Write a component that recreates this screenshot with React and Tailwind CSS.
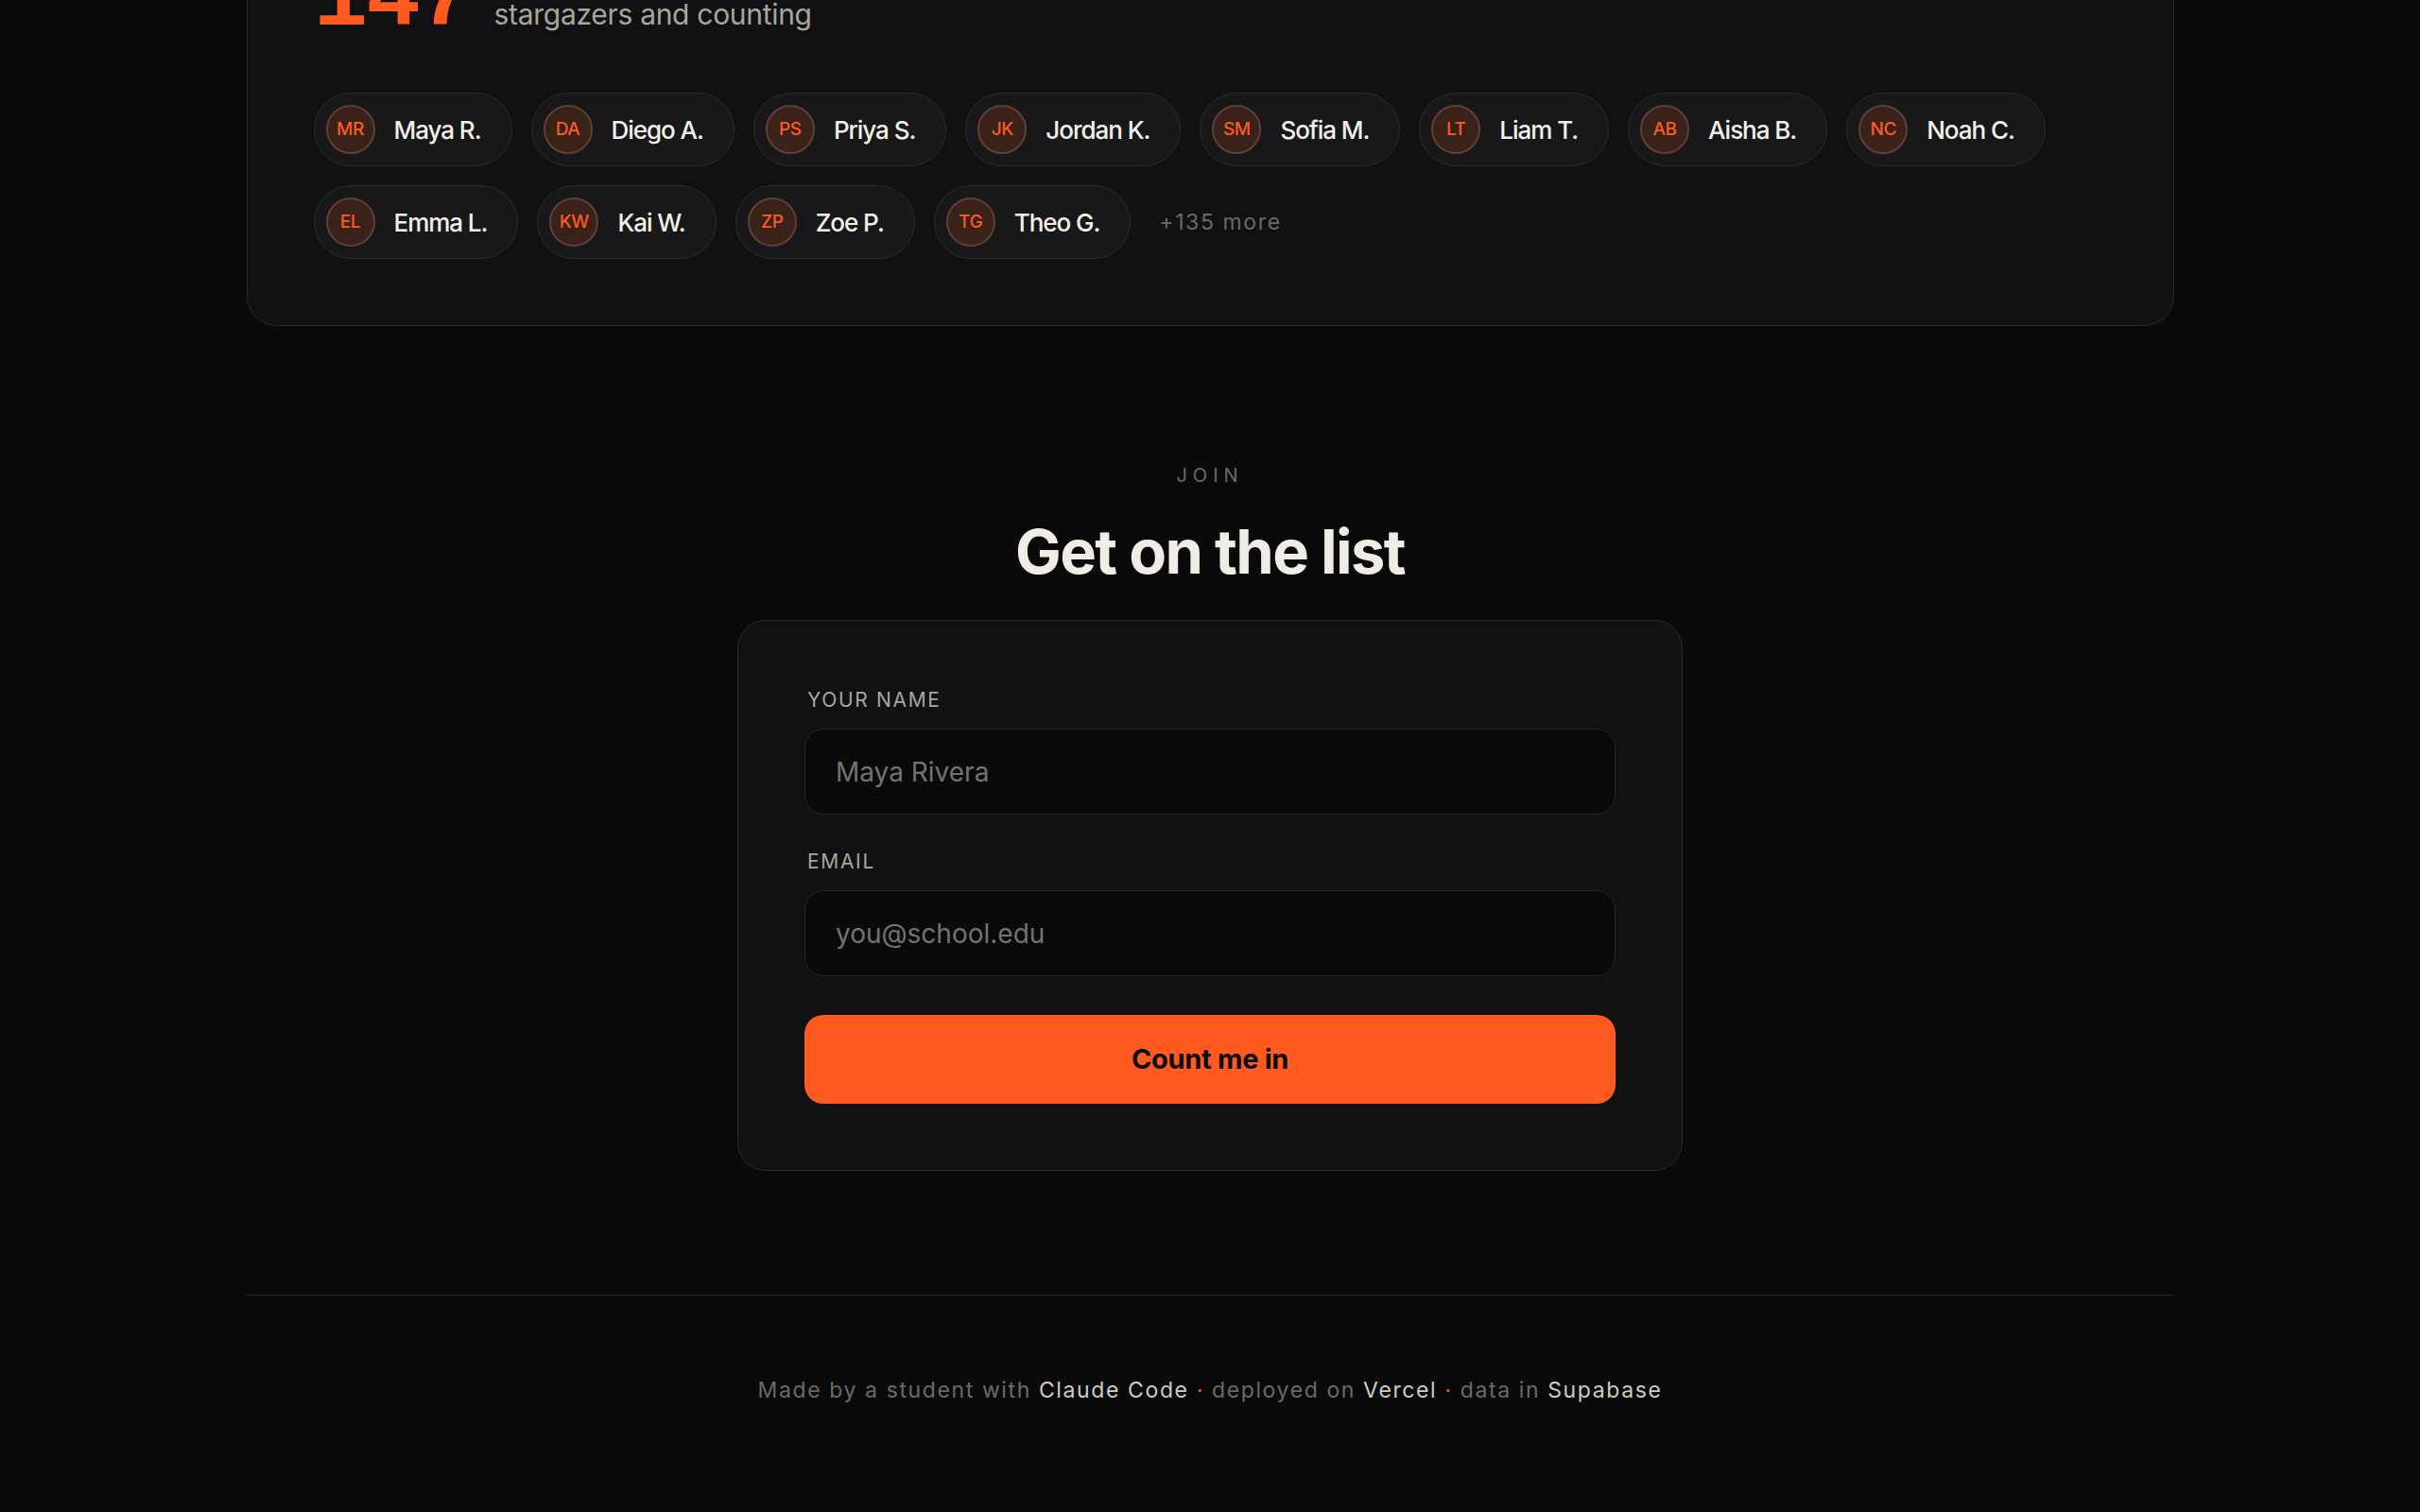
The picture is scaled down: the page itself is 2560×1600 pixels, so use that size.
import React from 'react';

const people = [
  { initials: 'MR', name: 'Maya R.' },
  { initials: 'DA', name: 'Diego A.' },
  { initials: 'PS', name: 'Priya S.' },
  { initials: 'JK', name: 'Jordan K.' },
  { initials: 'SM', name: 'Sofia M.' },
  { initials: 'LT', name: 'Liam T.' },
  { initials: 'AB', name: 'Aisha B.' },
  { initials: 'NC', name: 'Noah C.' },
  { initials: 'EL', name: 'Emma L.' },
  { initials: 'KW', name: 'Kai W.' },
  { initials: 'ZP', name: 'Zoe P.' },
  { initials: 'TG', name: 'Theo G.' },
];

const sans = { fontFamily: 'Inter, "Noto Sans", sans-serif' };

const Chip = ({ initials, name }) => (
  <div className="flex items-center gap-5 rounded-full border border-[#2d2d30] bg-[#18181b] py-3 pl-3 pr-8">
    <div className="flex h-[52px] w-[52px] items-center justify-center rounded-full border-2 border-[#5e4035] bg-[#3a2119] text-[19px] font-medium tracking-[-0.02em] text-[#ff5a1f]">
      {initials}
    </div>
    <span className="text-[26px] font-medium tracking-[-0.04em] text-[#f3f0ea]">{name}</span>
  </div>
);

const Field = ({ label, placeholder, type = 'text', className = '' }) => (
  <div className={className}>
    <label className="mb-[16px] block pl-[3px] text-[21px] leading-[28px] tracking-[0.08em] text-[#a8a69e]">
      {label}
    </label>
    <input
      type={type}
      placeholder={placeholder}
      className="h-[91px] w-full rounded-[20px] border border-[#262628] bg-[#0a0a0a] px-8 text-[28px] text-[#f3f0ea] outline-none placeholder:text-[#75736d]"
      style={sans}
    />
  </div>
);

export default function App() {
  return (
    <div className="h-[1600px] overflow-hidden bg-[#0a0a0a]" style={sans}>
      <div className="mx-auto w-[2039px]">
        {/* stargazers card, page is scrolled past its top */}
        <section className="-mt-[118px] rounded-[32px] border border-[#2a2a2c] bg-[#111113] px-[70px] pb-[70px] pt-[70px]">
          <div className="flex items-baseline gap-6">
            <span
              className="text-[96px] font-bold leading-none tracking-[-0.02em] text-[#ff5a1f]"
              style={{ fontFamily: '"Liberation Mono", monospace' }}
            >
              147
            </span>
            <span className="text-[30px] tracking-[-0.01em] text-[#a9a69d]">stargazers and counting</span>
          </div>
          <div className="mt-[49px] flex flex-wrap items-center gap-5">
            {people.map((p) => (
              <Chip key={p.initials} {...p} />
            ))}
            <span className="ml-[10px] text-[23px] tracking-[0.07em] text-[#6b6a66]">+135 more</span>
          </div>
        </section>

        {/* join form */}
        <section className="flex flex-col items-center pt-[144px]">
          <p className="text-[20px] leading-[28px] tracking-[0.3em] text-[#6b6a64]">JOIN</p>
          <h2 className="mt-[27px] text-[65px] font-bold leading-[80px] tracking-[-0.025em] text-[#f0ede6]">
            Get on the list
          </h2>
          <form className="mt-[32px] w-[1000px] rounded-[30px] border border-[#2a2a2c] bg-[#111113] p-[70px]">
            <Field label="YOUR NAME" placeholder="Maya Rivera" />
            <Field label="EMAIL" type="email" placeholder="you@school.edu" className="mt-[36px]" />
            <button
              type="submit"
              className="mt-[41px] h-[94px] w-full rounded-[20px] bg-[#ff5a1f] text-[29px] font-bold tracking-[-0.01em] text-[#0a0a0a]"
            >
              Count me in
            </button>
          </form>
        </section>

        <div className="mt-[131px] border-t border-[#262628]" />

        <footer className="pt-[84px] text-center text-[23px] leading-[32px] tracking-[0.07em] text-[#6b6a65]">
          Made by a student with <span className="text-[#cfccc3]">Claude Code</span>
          <span className="text-[#ff5a1f]"> · </span>
          deployed on <span className="text-[#cfccc3]">Vercel</span>
          <span className="text-[#ff5a1f]"> · </span>
          data in <span className="text-[#cfccc3]">Supabase</span>
        </footer>
      </div>
    </div>
  );
}
